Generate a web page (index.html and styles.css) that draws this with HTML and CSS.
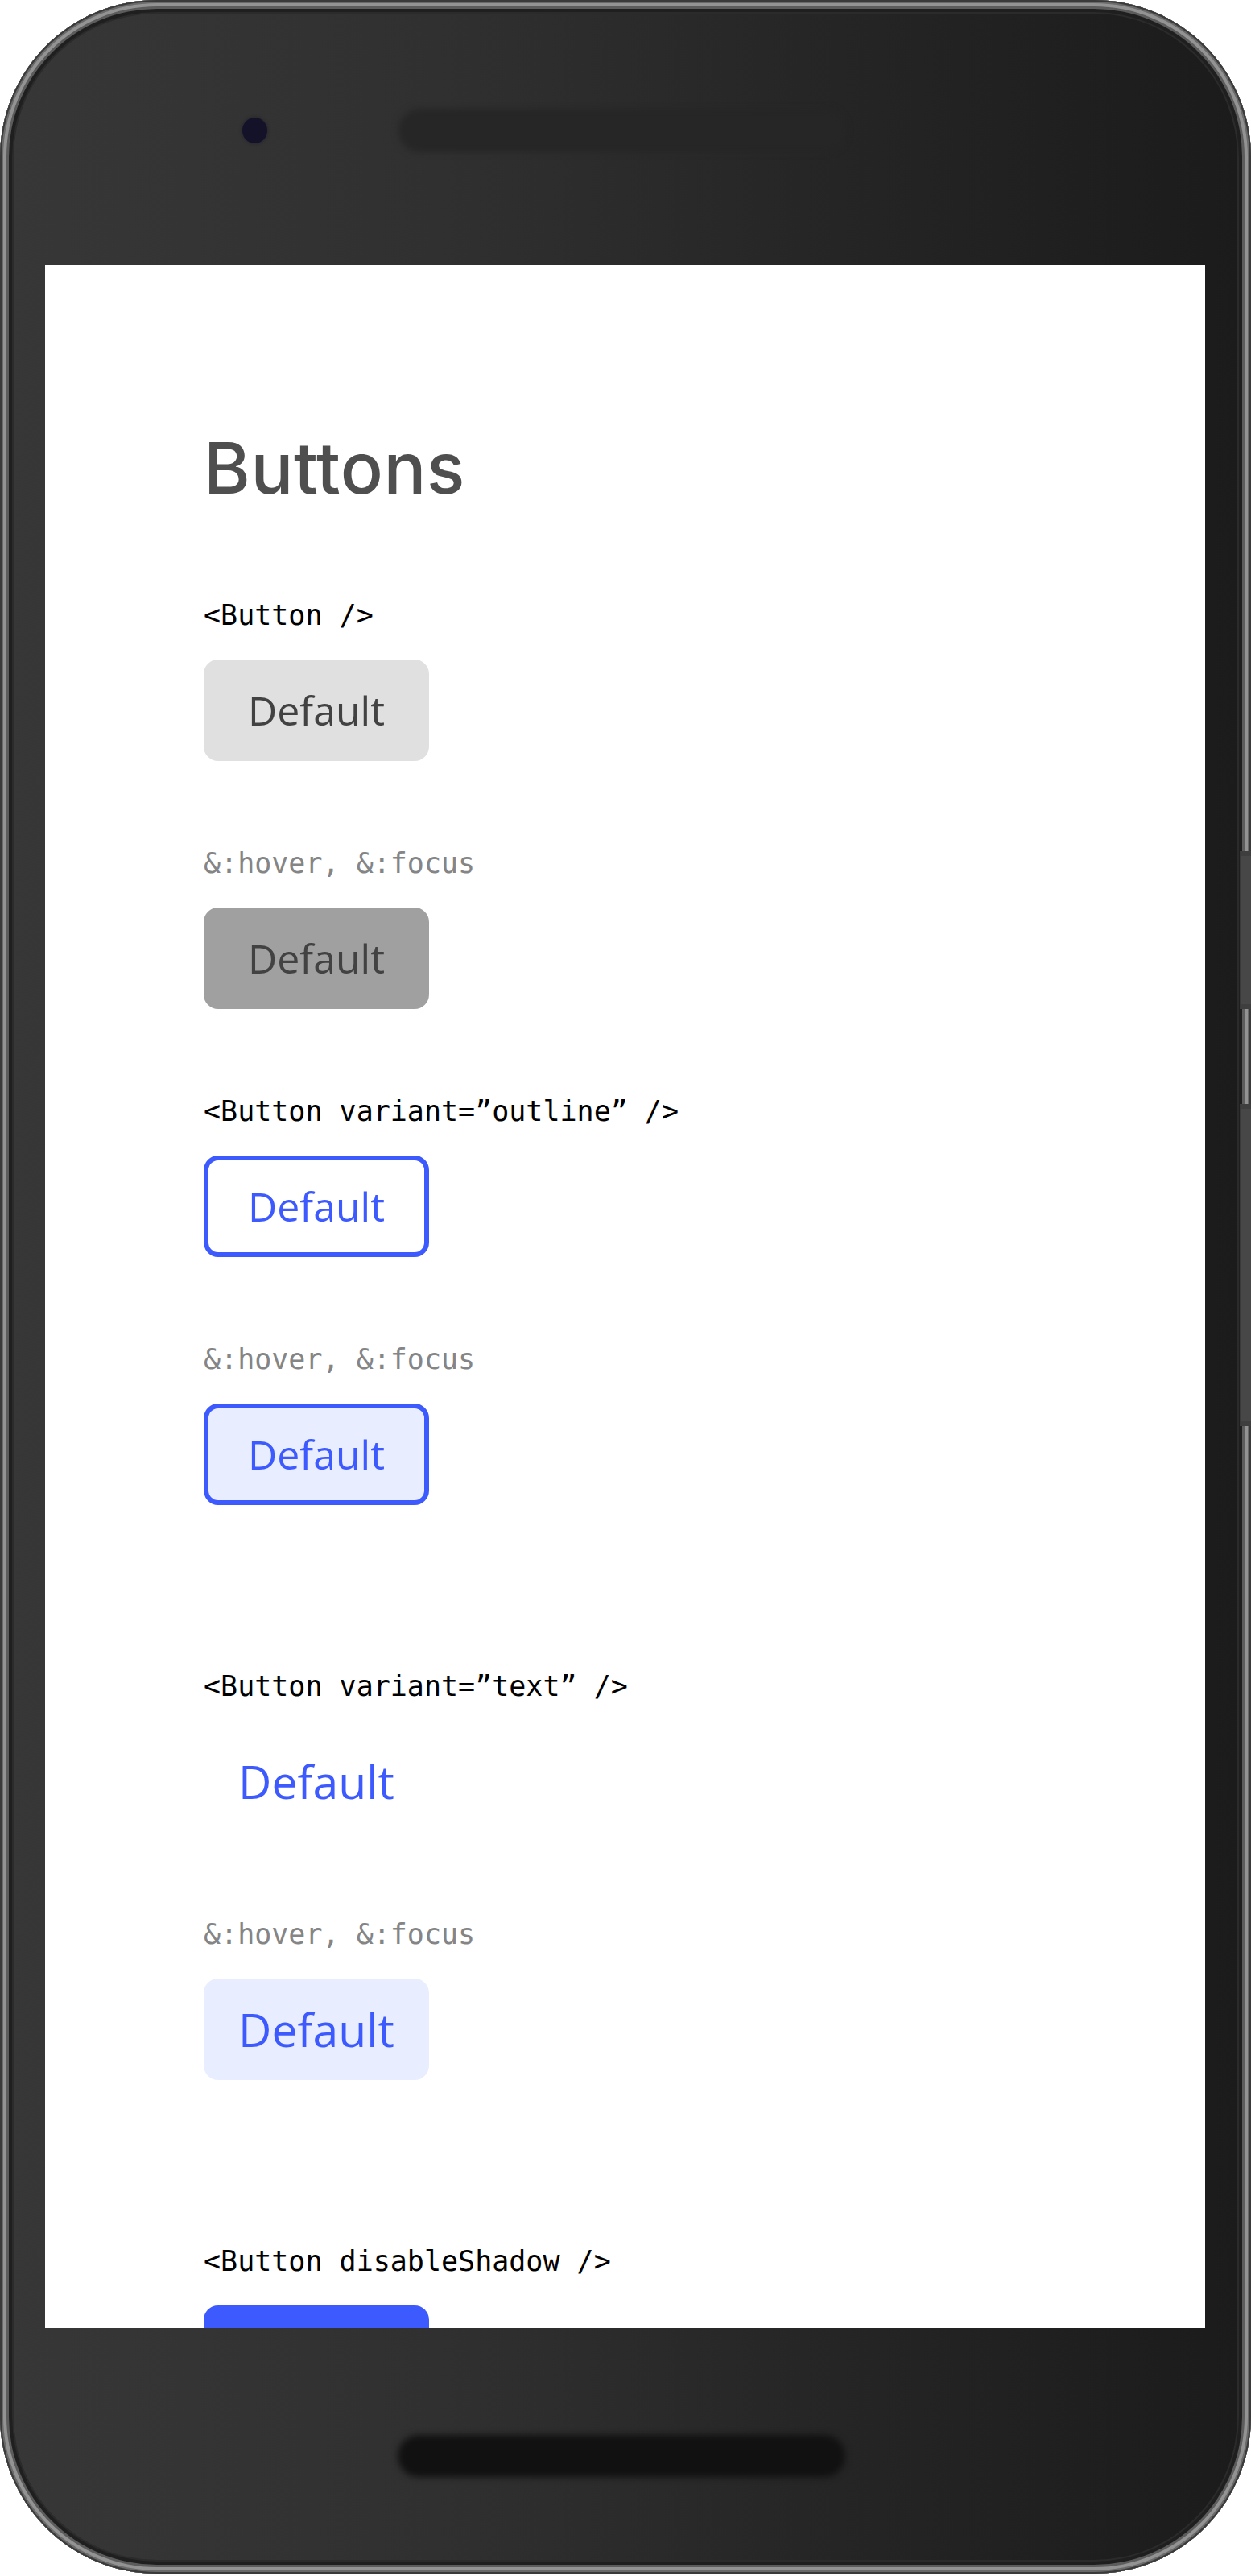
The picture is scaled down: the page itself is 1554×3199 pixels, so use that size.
FILE: index.html
```html
<!DOCTYPE html>
<html lang="en">
<head>
<meta charset="utf-8">
<title>Buttons</title>
<link rel="stylesheet" href="styles.css">
</head>
<body>
<div class="phone">
  <div class="side-key side-key-power"></div>
  <div class="side-key side-key-volume"></div>
  <div class="bezel-top">
    <div class="camera"></div>
    <div class="speaker"></div>
  </div>
  <div class="screen">
    <div class="content">
      <h1 class="title">Buttons</h1>

      <section class="group">
        <div class="label">&lt;Button /&gt;</div>
        <div class="btn btn-default">Default</div>
        <div class="label label-state">&amp;:hover, &amp;:focus</div>
        <div class="btn btn-default-hover">Default</div>
      </section>

      <section class="group">
        <div class="label">&lt;Button variant=”outline” /&gt;</div>
        <div class="btn btn-outline">Default</div>
        <div class="label label-state">&amp;:hover, &amp;:focus</div>
        <div class="btn btn-outline btn-outline-hover">Default</div>
      </section>

      <section class="group group-spaced">
        <div class="label">&lt;Button variant=”text” /&gt;</div>
        <div class="btn btn-text">Default</div>
        <div class="label label-state">&amp;:hover, &amp;:focus</div>
        <div class="btn btn-text btn-text-hover">Default</div>
      </section>

      <section class="group group-spaced">
        <div class="label">&lt;Button disableShadow /&gt;</div>
        <div class="btn btn-primary">Default</div>
      </section>
    </div>
  </div>
  <div class="bezel-bottom">
    <div class="speaker speaker-bottom"></div>
  </div>
</div>
</body>
</html>
```

FILE: styles.css
```css
* { box-sizing: border-box; }

html, body {
  margin: 0;
  padding: 0;
  background: #ffffff;
}

.phone {
  position: relative;
  width: 1554px;
  height: 3196px;
  border-radius: 195px;
  background: linear-gradient(90deg, #373737 0%, #303030 35%, #242424 70%, #1b1b1b 100%);
  box-shadow:
    inset 0 0 0 2px #3a3a3a,
    inset 0 0 0 4px #6a6a6a,
    inset 0 0 0 8px #939393,
    inset 0 0 0 11px #5c5c5c,
    inset 0 0 0 15px #1f1f1f,
    inset 0 0 0 17px #2b2b2b;
  display: flex;
  flex-direction: column;
  overflow: hidden;
}

.side-key {
  position: absolute;
  right: 0;
  width: 14px;
  background: #474747;
  border-left: 2px solid #3a3a3a;
  border-top: 6px solid #3e3e3e;
  border-bottom: 6px solid #3e3e3e;
}
.side-key-power { top: 1057px; height: 196px; }
.side-key-volume { top: 1371px; height: 400px; }

.bezel-top {
  height: 329px;
  flex: none;
  display: flex;
  align-items: center;
  padding: 0 0 5px 301px;
  gap: 163px;
}

.camera {
  width: 31px;
  height: 32px;
  border-radius: 50%;
  background: #141228;
  box-shadow: 0 0 4px rgba(20, 18, 40, 0.6);
  flex: none;
}

.speaker {
  width: 556px;
  height: 54px;
  border-radius: 27px;
  background: #262626;
  filter: blur(4px);
  flex: none;
}

.screen {
  flex: none;
  height: 2562px;
  margin: 0 57px 0 56px;
  background: #ffffff;
  overflow: hidden;
}

.content {
  padding: 208px 0 0 197px;
  display: flex;
  flex-direction: column;
}

.title {
  margin: 0 0 114px 0;
  font-family: "Inter", "Roboto", sans-serif;
  font-weight: 500;
  font-size: 88px;
  line-height: 88px;
  color: #4f4f4f;
  letter-spacing: 0.6px;
}

.group {
  display: flex;
  flex-direction: column;
  align-items: flex-start;
}

.group-spaced {
  margin-top: 98px;
}

.label {
  font-family: "DejaVu Sans Mono", monospace;
  font-size: 35px;
  line-height: 50px;
  height: 50px;
  color: #000000;
  margin-bottom: 30px;
  white-space: pre;
}

.label-state {
  color: #858585;
}

.btn {
  width: 280px;
  height: 126px;
  border-radius: 18px;
  display: flex;
  align-items: center;
  justify-content: center;
  font-family: "Open Sans", "Noto Sans", sans-serif;
  font-weight: 500;
  font-size: 50px;
  color: #424242;
  margin-bottom: 102px;
}

.btn-default { background: #e0e0e0; }
.btn-default-hover { background: #a0a0a0; }

.btn-outline {
  background: #ffffff;
  border: 6px solid #3d5afe;
  color: #3d5afe;
}
.btn-outline-hover { background: #e8edff; }

.btn-text {
  background: transparent;
  color: #3d5afe;
  font-size: 57px;
}
.btn-text-hover { background: #e8eeff; }

.btn-primary {
  background: #3d5afe;
  color: #ffffff;
}

.bezel-bottom {
  flex: 1;
  display: flex;
  align-items: center;
  padding: 12px 0 0 494px;
}

.speaker-bottom {
  background: #111111;
  height: 52px;
}
```
